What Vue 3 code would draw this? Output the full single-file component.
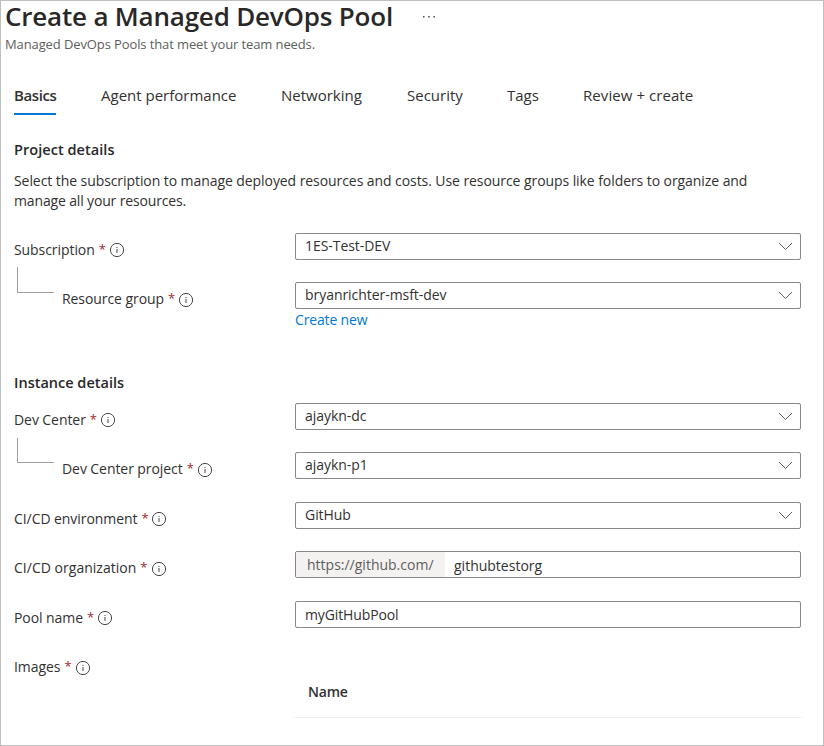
<script setup>
const tabs = [
  { label: 'Basics', cls: 't-basics', active: true },
  { label: 'Agent performance', cls: 't-agent' },
  { label: 'Networking', cls: 't-net' },
  { label: 'Security', cls: 't-sec' },
  { label: 'Tags', cls: 't-tags' },
  { label: 'Review + create', cls: 't-review' },
]
const project = [
  { label: 'Subscription', value: '1ES-Test-DEV', cls: 'r-sub', kind: 'select' },
  { label: 'Resource group', value: 'bryanrichter-msft-dev', cls: 'r-group', kind: 'select', child: true },
]
const instance = [
  { label: 'Dev Center', value: 'ajaykn-dc', cls: 'r-dc', kind: 'select' },
  { label: 'Dev Center project', value: 'ajaykn-p1', cls: 'r-proj', kind: 'select', child: true },
  { label: 'CI/CD environment', value: 'GitHub', cls: 'r-env', kind: 'select' },
  { label: 'CI/CD organization', value: 'githubtestorg', prefix: 'https://github.com/', cls: 'r-org', kind: 'text' },
  { label: 'Pool name', value: 'myGitHubPool', cls: 'r-pool', kind: 'text' },
  { label: 'Images', cls: 'r-images', kind: 'table' },
]
const sections = [
  {
    title: 'Project details',
    cls: 's-project',
    text: ['Select the subscription to manage deployed resources and costs. Use resource groups like folders to organize and', 'manage all your resources.'],
    rows: project,
    link: 'Create new',
  },
  { title: 'Instance details', cls: 's-instance', rows: instance },
]
</script>

<template>
  <main class="page">
    <header>
      <div class="title-row">
        <h1>Create a Managed DevOps Pool</h1>
        <svg class="more" width="14" height="4" viewBox="0 0 14 4"><path d="M1 1h1.5v1.5H1zM6.2 1h1.5v1.5H6.2zM11.4 1h1.5v1.5h-1.5z" fill="#4a4846" /></svg>
      </div>
      <p class="subtitle">Managed DevOps Pools that meet your team needs.</p>
    </header>
    <nav class="tabs">
      <a v-for="t in tabs" :key="t.label" class="tab" :class="[t.cls, { active: t.active }]">{{ t.label }}</a>
    </nav>
    <section v-for="s in sections" :key="s.title" :class="s.cls">
      <h2>{{ s.title }}</h2>
      <p v-if="s.text" class="intro"><span v-for="(l, i) in s.text" :key="i" :class="'line' + i">{{ l }}</span></p>
      <div class="rows">
        <div v-for="r in s.rows" :key="r.label" class="row" :class="r.cls">
          <div class="label">
            <i v-if="r.child" class="elbow"></i>
            <span class="name">{{ r.label }}</span>
            <span class="star">*</span>
            <svg class="info" width="16" height="16" viewBox="0 0 16 16">
              <circle cx="8" cy="8" r="6.6" fill="none" stroke="#484644" stroke-width="1" />
              <path d="M7.5 4.9h1v1.1h-1zM7.5 7h1v4.1h-1z" fill="#484644" />
            </svg>
          </div>
          <div v-if="r.kind === 'table'" class="table"><span class="th">Name</span></div>
          <div v-else class="field" :class="r.kind">
            <span v-if="r.prefix" class="prefix"><span>{{ r.prefix }}</span></span>
            <span class="value">{{ r.value }}</span>
            <svg v-if="r.kind === 'select'" class="chev" width="15" height="9" viewBox="0 0 15 9"><path d="M1 1L7.5 7.5L14 1" fill="none" stroke="#605e5c" stroke-width="1" /></svg>
          </div>
        </div>
      </div>
      <a v-if="s.link" class="link">{{ s.link }}</a>
    </section>
  </main>
</template>

<style>
body { background: #fff; }
</style>

<style scoped>
.page {
  box-sizing: border-box;
  width: 824px;
  height: 746px;
  border: 1px solid #bfbfbf;
  background: #fff;
  color: #323130;
  font: 14px/20px "Open Sans", "Noto Sans", sans-serif;
  white-space: nowrap;
}
h1, h2, p { margin: 0; }
header { padding-left: 4px; }
.title-row { display: flex; align-items: center; height: 32px; }
h1 { width: 417px; font-size: 26px; line-height: 30px; height: 32px; font-weight: 550; letter-spacing: -0.2px; color: #292827; }
.more { flex: none; }
.subtitle { font-size: 13px; line-height: 18px; margin-top: 2px; letter-spacing: -0.11px; color: #605e5c; }
.tabs { display: flex; margin: 32px 0 0 13px; height: 30px; gap: 45px; }
.tab { box-sizing: border-box; height: 30px; line-height: 20px; font-size: 15px; }
.tab.active { font-weight: 600; letter-spacing: -0.4px; border-bottom: 2px solid #0078d4; }
.t-basics { width: 42px; }
.t-agent { width: 135px; }
.t-net { width: 81px; }
.t-sec { width: 55px; }
.t-tags { width: 31px; }
.t-review { letter-spacing: 0.07px; }
section { padding-left: 13px; }
.s-project { height: 233px; padding-top: 25px; box-sizing: border-box; }
h2 { font-size: 14.5px; line-height: 20px; font-weight: 600; color: #292827; }
.s-project h2 { letter-spacing: 0.05px; }
.intro { display: flex; flex-direction: column; margin-top: 11px; height: 62px; }
.intro span { align-self: flex-start; }
.line0 { letter-spacing: -0.073px; }
.line1 { letter-spacing: -0.15px; }
.s-instance { padding-top: 25px; }
.s-instance .rows { margin-top: 10px; }
.row { display: grid; grid-template-columns: 281px 506px; height: 27px; margin-bottom: 22px; }
.r-proj, .r-org { margin-bottom: 23px; }
.label { display: flex; align-items: flex-start; padding-top: 7px; height: 20px; }
.name { letter-spacing: -0.07px; }
.r-org .name { letter-spacing: 0.02px; }
.star { color: #a4262c; font-size: 13px; line-height: 19px; width: 6px; margin: 0 4px 0 4px; }
.info { margin-top: 2px; flex: none; }
.r-group .info, .r-proj .info, .r-org .info, .r-images .info { margin-top: 3px; }
.r-org .info, .r-images .info { margin-left: 1px; }
.elbow { box-sizing: border-box; width: 37px; height: 26px; margin: -22px 8px 0 3px; border-left: 1px solid #a19f9d; border-bottom: 1px solid #a19f9d; flex: none; }
.r-proj .elbow { height: 25px; margin-top: -21px; }
.field { box-sizing: border-box; display: flex; height: 27px; border: 1px solid #8a8886; border-radius: 2px; padding: 0 7px 0 9px; }
.value { line-height: 25px; flex: 1; letter-spacing: -0.05px; }
.select .value { line-height: 23px; }
.r-org .value { line-height: 27px; letter-spacing: 0; }
.r-pool .value { letter-spacing: -0.12px; }
.chev { margin-top: 8px; flex: none; }
.prefix { width: 149px; box-sizing: border-box; background: #f3f2f1; color: #605e5c; padding-left: 11px; line-height: 25px; margin: 0 9px 0 -9px; }
.link { display: block; color: #0078d4; margin: -21px 0 0 281px; letter-spacing: -0.15px; }
.table { box-sizing: border-box; height: 68px; border-bottom: 1px solid #edebe9; padding: 32px 0 0 13px; font-weight: 600; letter-spacing: -0.2px; }
</style>
